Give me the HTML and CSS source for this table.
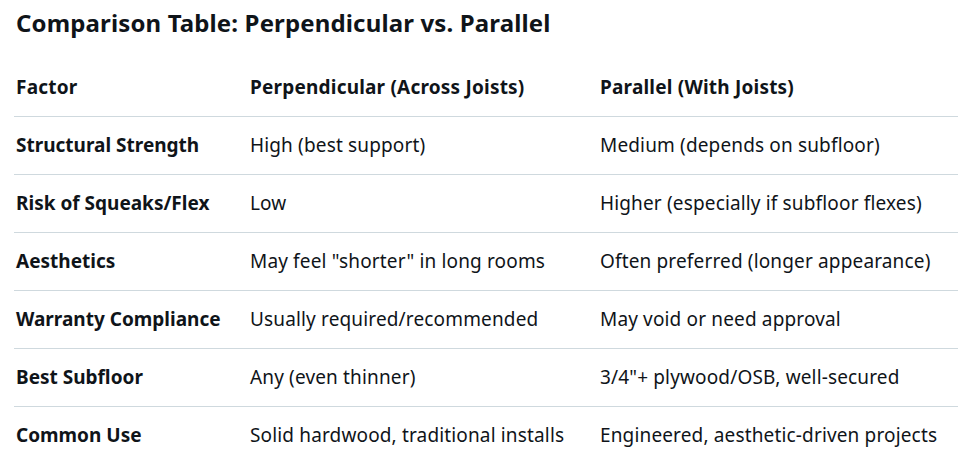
FILE: index.html
```html
<!DOCTYPE html>
<html lang="en">
<head>
<meta charset="utf-8">
<title>Comparison Table</title>
<link rel="stylesheet" href="styles.css">
</head>
<body>
<main class="page">
  <h2 class="title">Comparison Table: Perpendicular vs. Parallel</h2>
  <div class="table">
    <div class="row head">
      <div class="cell">Factor</div>
      <div class="cell">Perpendicular (Across Joists)</div>
      <div class="cell">Parallel (With Joists)</div>
    </div>
    <div class="row">
      <div class="cell key">Structural Strength</div>
      <div class="cell">High (best support)</div>
      <div class="cell">Medium (depends on subfloor)</div>
    </div>
    <div class="row">
      <div class="cell key">Risk of Squeaks/Flex</div>
      <div class="cell">Low</div>
      <div class="cell">Higher (especially if subfloor flexes)</div>
    </div>
    <div class="row">
      <div class="cell key">Aesthetics</div>
      <div class="cell">May feel "shorter" in long rooms</div>
      <div class="cell">Often preferred (longer appearance)</div>
    </div>
    <div class="row">
      <div class="cell key">Warranty Compliance</div>
      <div class="cell">Usually required/recommended</div>
      <div class="cell">May void or need approval</div>
    </div>
    <div class="row">
      <div class="cell key">Best Subfloor</div>
      <div class="cell">Any (even thinner)</div>
      <div class="cell">3/4"+ plywood/OSB, well-secured</div>
    </div>
    <div class="row last">
      <div class="cell key">Common Use</div>
      <div class="cell">Solid hardwood, traditional installs</div>
      <div class="cell">Engineered, aesthetic-driven projects</div>
    </div>
  </div>
</main>
</body>
</html>
```
FILE: styles.css
```css
html, body {
  margin: 0;
  padding: 0;
  background: #ffffff;
}
body {
  font-family: "Noto Sans", "Open Sans", sans-serif;
  color: #0f1419;
}
.page {
  padding: 7px 1px 0 14px;
}
.title {
  margin: 0 0 20px 2px;
  font-size: 24px;
  line-height: 32px;
  font-weight: 700;
  letter-spacing: 0.14px;
}
.table {
  display: flex;
  flex-direction: column;
}
.row {
  display: grid;
  grid-template-columns: 236px 350px 1fr;
  border-bottom: 1px solid #cfd9de;
  padding: 16px 0 17px;
  font-size: 19px;
  line-height: 24px;
  letter-spacing: 0.15px;
}
.row.last {
  border-bottom: none;
}
.cell {
  white-space: nowrap;
}
.cell:first-child {
  padding-left: 2px;
}
.key {
  font-weight: 700;
  letter-spacing: 0;
}
.head .cell {
  font-weight: 700;
  letter-spacing: 0.2px;
}
```
